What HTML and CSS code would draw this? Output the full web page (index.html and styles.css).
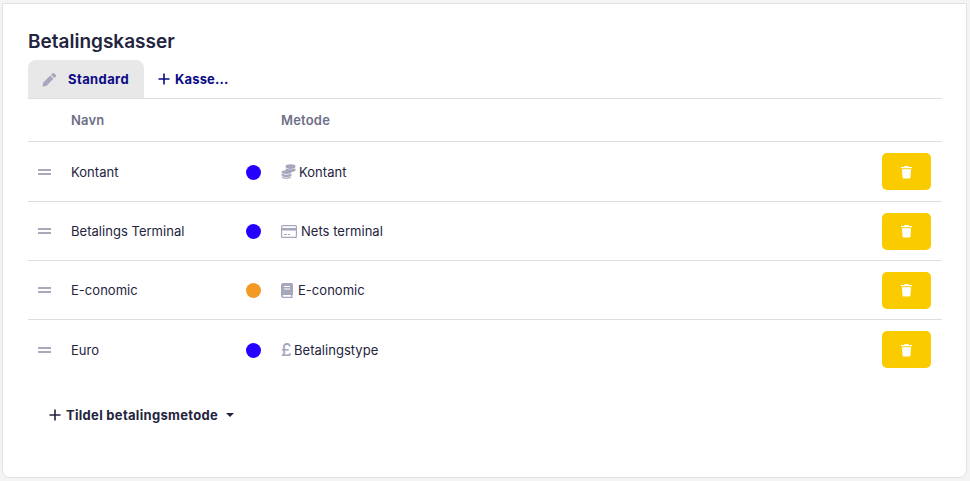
FILE: index.html
```html
<!DOCTYPE html>
<html lang="da">
<head>
<meta charset="utf-8">
<title>Betalingskasser</title>
<link rel="stylesheet" href="styles.css">
</head>
<body>
<main class="card">
  <h1 class="title">Betalingskasser</h1>
  <nav class="tabs">
    <a class="tab tab-active">
      <svg class="tab-icon" viewBox="0 0 16 16"><path d="M11.3 1.2a1 1 0 0 1 1.4 0l2.1 2.1a1 1 0 0 1 0 1.4l-1.7 1.7-3.5-3.5zM8.7 3.8l3.5 3.5-7.6 7.6-4 .6.6-4z"/></svg>
      <span class="tab-std">Standard</span>
    </a>
    <a class="tab tab-add">
      <svg class="plus" viewBox="0 0 12 12"><path d="M6 .5v11M.5 6h11"/></svg>
      Kasse...
    </a>
  </nav>
  <div class="row head">
    <span class="c-name">Navn</span>
    <span class="c-method">Metode</span>
  </div>
  <div class="row r1">
    <span class="grip"></span>
    <span class="c-name">Kontant</span>
    <span class="dot blue"></span>
    <span class="c-method">
      <svg class="mi mi-coins" viewBox="0 0 15 15"><ellipse cx="9.5" cy="2.6" rx="5" ry="2.3"/><path d="M4.6 4.4c1.200 1 8.200 1.100 9.900-.2v1.700c0 1.300-2.200 2.200-4.900 2.200-2.700 0-5-.8-5-2.200z"/><ellipse cx="5.500" cy="8.100" rx="5" ry="1.900"/><path d="M.5 9.500c1.600 1.500 8.400 1.500 10 0v1.400c0 1.300-2.200 2.100-5 2.100s-5-.8-5-2.100z"/><path d="M.5 12.500c1.600 1.400 8.400 1.400 10 0 0 1.400-2.200 2.300-5 2.300s-5-.9-5-2.300z"/></svg>
      Kontant
    </span>
    <button class="del" aria-label="Slet"><svg viewBox="0 0 12 14"><path d="M4 .5h4l.5 1H11.500a.5.5 0 0 1 0 1.500H.5a.5.5 0 0 1 0-1.500H3.500zM1 4h10l-.7 9a1 1 0 0 1-1 1H2.700a1 1 0 0 1-1-1z"/></svg></button>
  </div>
  <div class="row r2">
    <span class="grip"></span>
    <span class="c-name">Betalings Terminal</span>
    <span class="dot blue"></span>
    <span class="c-method">
      <svg class="mi mi-card" viewBox="0 0 16 13"><path fill-rule="evenodd" d="M1.500 0h13A1.500 1.500 0 0 1 16 1.500v10a1.500 1.500 0 0 1-1.500 1.500h-13A1.500 1.500 0 0 1 0 11.500v-10A1.500 1.500 0 0 1 1.500 0zM1.200 1.200v1.800h13.600V1.200zM1.200 5.500v6.300h13.600V5.500zM3 9h3v1H3zM7 9h2v1H7z"/></svg>
      Nets terminal
    </span>
    <button class="del" aria-label="Slet"><svg viewBox="0 0 12 14"><path d="M4 .5h4l.5 1H11.500a.5.5 0 0 1 0 1.500H.5a.5.5 0 0 1 0-1.500H3.500zM1 4h10l-.7 9a1 1 0 0 1-1 1H2.700a1 1 0 0 1-1-1z"/></svg></button>
  </div>
  <div class="row r3">
    <span class="grip"></span>
    <span class="c-name">E-conomic</span>
    <span class="dot orange"></span>
    <span class="c-method">
      <svg class="mi mi-book" viewBox="0 0 12 15"><path fill-rule="evenodd" d="M2.200 0h8.300A1.500 1.500 0 0 1 12 1.500v10c0 .5-.3.900-.7 1.100v1.300c.4.100.7.300.7.600 0 .300-.3.500-.6.500H2.500A2.500 2.500 0 0 1 0 12.500V2.200A2.200 2.200 0 0 1 2.200 0zM3 3v1.100h6V3zM3 5.500v1.100h6V5.500zM2.500 12a.8.8 0 0 0 0 1.700h7.500V12z"/></svg>
      E-conomic
    </span>
    <button class="del" aria-label="Slet"><svg viewBox="0 0 12 14"><path d="M4 .5h4l.5 1H11.500a.5.5 0 0 1 0 1.500H.5a.5.5 0 0 1 0-1.500H3.500zM1 4h10l-.7 9a1 1 0 0 1-1 1H2.700a1 1 0 0 1-1-1z"/></svg></button>
  </div>
  <div class="row r4">
    <span class="grip"></span>
    <span class="c-name">Euro</span>
    <span class="dot blue"></span>
    <span class="c-method">
      <span class="pound">£</span>
      Betalingstype
    </span>
    <button class="del" aria-label="Slet"><svg viewBox="0 0 12 14"><path d="M4 .5h4l.5 1H11.500a.5.5 0 0 1 0 1.500H.5a.5.5 0 0 1 0-1.500H3.500zM1 4h10l-.7 9a1 1 0 0 1-1 1H2.700a1 1 0 0 1-1-1z"/></svg></button>
  </div>
  <div class="assign">
    <svg class="plus" viewBox="0 0 12 12"><path d="M6 .5v11M.5 6h11"/></svg>
    Tildel betalingsmetode
    <span class="caret"></span>
  </div>
</main>
</body>
</html>
```
FILE: styles.css
```css
* { box-sizing: border-box; }
html, body { margin: 0; height: 100%; }
body {
  background: #f4f4f4;
  padding: 3px 3px 3px 2px;
  font-family: Inter, "Liberation Sans", sans-serif;
  font-size: 13px;
  letter-spacing: .03px;
  color: #24243e;
}
.card {
  height: 475px;
  background: #fff;
  border: 1px solid #e2e2e2;
  border-radius: 8px;
  border-top-left-radius: 0;
  border-top-right-radius: 0;
  padding: 24px 24px 0 25px;
}
.title {
  margin: 0;
  font-family: Inter, sans-serif;
  font-size: 19px;
  line-height: 27px;
  font-weight: 600;
  letter-spacing: 0;
  color: #24243e;
}
.tabs {
  display: flex;
  height: 39px;
  margin-top: 5px;
  border-bottom: 1px solid #dedede;
}
.tab {
  display: flex;
  align-items: center;
  font-weight: 700;
  letter-spacing: .15px;
  color: #0b0b86;
}
.tab-std { letter-spacing: .4px; }
.tab-active {
  width: 116px;
  padding-left: 14px;
  gap: 11px;
  background: #e8e8e8;
  border-radius: 8px 8px 0 0;
}
.tab-add { padding-left: 14px; gap: 5px; }
.tab-icon { width: 15px; height: 15px; fill: #a6a6bd; }
.plus { width: 12px; height: 12px; fill: none; stroke: currentColor; stroke-width: 1.600; }
.row {
  display: flex;
  align-items: center;
  height: 59px;
  border-bottom: 1px solid #dedede;
}
.r1 { height: 60px; }
.head {
  height: 43px;
  font-weight: 600;
  letter-spacing: .2px;
  color: #6f6f87;
}
.head .c-name { margin-left: 43px; }
.head .c-method { margin-left: 40px; }
.grip {
  width: 13px;
  height: 6px;
  margin-left: 10px;
  margin-right: 20px;
  border-top: 2px solid #a9a9bb;
  border-bottom: 2px solid #a9a9bb;
}
.c-name { width: 170px; }
.dot { width: 15px; height: 15px; border-radius: 50%; margin: 1px 20px 0 5px; }
.blue { background: #2600ff; }
.orange { background: #f29a24; }
.c-method { display: flex; align-items: center; gap: 3px; flex: 1; }
.mi { fill: #a6a6bd; flex: none; }
.mi-coins { width: 15px; height: 15px; }
.mi-card { width: 16px; height: 13px; margin-right: 1px; }
.mi-book { width: 12px; height: 15px; margin-right: 2px; }
.pound { color: #a6a6bd; font-size: 17px; line-height: 16px; font-weight: 500; width: 10px; }
.del {
  width: 49px;
  height: 37px;
  margin-right: 11px;
  border: 0;
  border-radius: 5px;
  background: #facc00;
  display: flex;
  align-items: center;
  justify-content: center;
  padding: 0;
}
.del svg { width: 11px; height: 14px; fill: #fff; }
.r4 { border-bottom: 0; }
.assign {
  display: flex;
  align-items: center;
  gap: 5px;
  margin: 16px 0 0 21px;
  height: 40px;
  font-weight: 700;
  letter-spacing: .3px;
  color: #24243e;
}
.caret {
  width: 0;
  height: 0;
  margin-left: 3px;
  border-left: 4px solid transparent;
  border-right: 4px solid transparent;
  border-top: 4px solid #24243e;
}
```
